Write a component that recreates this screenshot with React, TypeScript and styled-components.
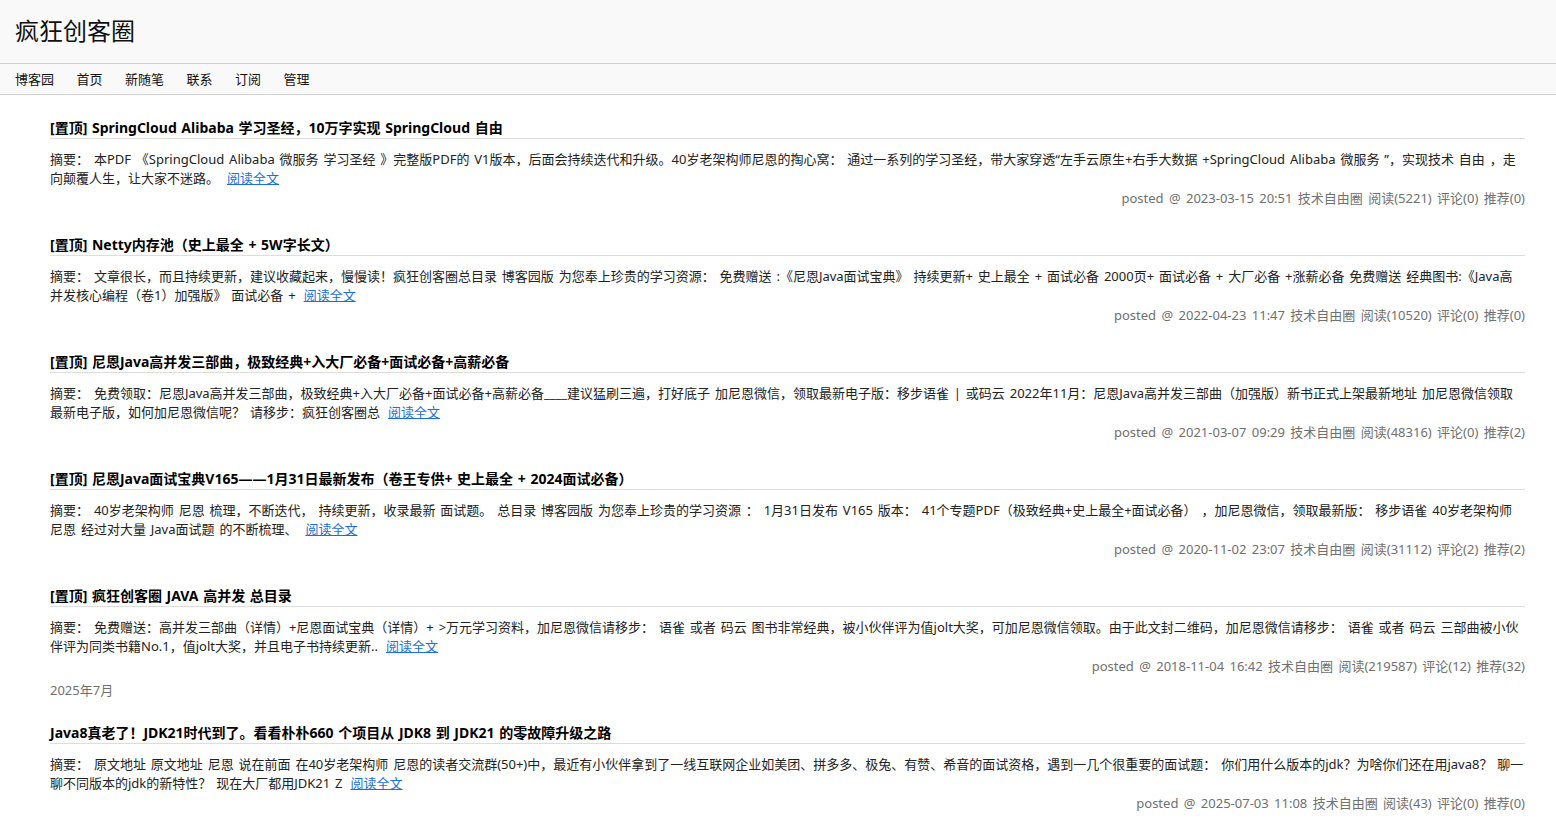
import React from 'react';
import styled, { createGlobalStyle } from 'styled-components';

const GlobalStyle = createGlobalStyle`
  html, body {
    margin: 0;
    padding: 0;
    background: #fff;
  }
  body {
    font-family: "Noto Sans", "Noto Sans CJK SC", sans-serif;
    font-size: 13px;
    color: #333;
  }
`;

const Header = styled.header`
  background: #f9f9f9;
  border-bottom: 1px solid #d0d0d0;
  height: 63px;
  display: flex;
  align-items: center;
  padding: 0 15px;
`;

const BlogTitle = styled.a`
  font-size: 24px;
  color: #111;
  text-decoration: none;
  line-height: 30px;
  margin-top: -2px;
`;

const NavBar = styled.nav`
  background: #f9f9f9;
  border-bottom: 1px solid #d0d0d0;
  height: 30px;
  display: flex;
  align-items: center;
  gap: 22.5px;
  padding: 0 15px;
`;

const NavLink = styled.a`
  color: #111;
  font-size: 13px;
  line-height: 18px;
  text-decoration: none;
`;

const Main = styled.main`
  padding: 24px 31px 20px 50px;
`;

const Post = styled.article`
  margin-bottom: 28px;
`;

const PostTitle = styled.h2`
  margin: 0;
  font-size: 14px;
  font-weight: bold;
  color: #000;
  line-height: 18px;
  padding-bottom: 1px;
  border-bottom: 1px solid #ddd;
  word-spacing: 1px;
`;

const Summary = styled.p`
  margin: 11px 0 0;
  font-size: 13px;
  line-height: 19px;
  color: #222;
`;

const SummaryText = styled.span`
  word-spacing: 1.5px;
`;

const ReadMore = styled.a`
  color: #1a6fd8;
  text-decoration: underline;
  margin-left: 8px;
`;

const PostDesc = styled.div`
  text-align: right;
  color: #707070;
  font-size: 13px;
  line-height: 19px;
  margin-top: 1px;
  word-spacing: 2px;
`;

const DayTitle = styled.div`
  color: #707070;
  font-size: 13px;
  line-height: 19px;
  margin: -23px 0 24px;
`;

type PostData = {
  title: string;
  summary: string;
  date: string;
  read: number;
  comment: number;
  digg: number;
  pinned?: boolean;
};

const posts: PostData[] = [
  {
    pinned: true,
    title: 'SpringCloud Alibaba 学习圣经，10万字实现 SpringCloud 自由',
    summary:
      '摘要： 本PDF 《SpringCloud Alibaba 微服务 学习圣经 》完整版PDF的 V1版本，后面会持续迭代和升级。40岁老架构师尼恩的掏心窝： 通过一系列的学习圣经，带大家穿透“左手云原生+右手大数据 +SpringCloud Alibaba 微服务 ”，实现技术 自由 ，走向颠覆人生，让大家不迷路。',
    date: '2023-03-15 20:51',
    read: 5221,
    comment: 0,
    digg: 0,
  },
  {
    pinned: true,
    title: 'Netty内存池（史上最全 + 5W字长文）',
    summary:
      '摘要： 文章很长，而且持续更新，建议收藏起来，慢慢读！疯狂创客圈总目录 博客园版 为您奉上珍贵的学习资源： 免费赠送 :《尼恩Java面试宝典》 持续更新+ 史上最全 + 面试必备 2000页+ 面试必备 + 大厂必备 +涨薪必备 免费赠送 经典图书:《Java高并发核心编程（卷1）加强版》 面试必备 +',
    date: '2022-04-23 11:47',
    read: 10520,
    comment: 0,
    digg: 0,
  },
  {
    pinned: true,
    title: '尼恩Java高并发三部曲，极致经典+入大厂必备+面试必备+高薪必备',
    summary:
      '摘要： 免费领取：尼恩Java高并发三部曲，极致经典+入大厂必备+面试必备+高薪必备____建议猛刷三遍，打好底子 加尼恩微信，领取最新电子版：移步语雀 | 或码云 2022年11月：尼恩Java高并发三部曲（加强版）新书正式上架最新地址 加尼恩微信领取最新电子版，如何加尼恩微信呢？ 请移步：疯狂创客圈总',
    date: '2021-03-07 09:29',
    read: 48316,
    comment: 0,
    digg: 2,
  },
  {
    pinned: true,
    title: '尼恩Java面试宝典V165——1月31日最新发布（卷王专供+ 史上最全 + 2024面试必备）',
    summary:
      '摘要： 40岁老架构师 尼恩 梳理，不断迭代， 持续更新，收录最新 面试题。 总目录 博客园版 为您奉上珍贵的学习资源 ： 1月31日发布 V165 版本： 41个专题PDF（极致经典+史上最全+面试必备） ，加尼恩微信，领取最新版： 移步语雀 40岁老架构师 尼恩 经过对大量 Java面试题 的不断梳理、',
    date: '2020-11-02 23:07',
    read: 31112,
    comment: 2,
    digg: 2,
  },
  {
    pinned: true,
    title: '疯狂创客圈 JAVA 高并发 总目录',
    summary:
      '摘要： 免费赠送：高并发三部曲（详情）+尼恩面试宝典（详情）+ >万元学习资料，加尼恩微信请移步： 语雀 或者 码云 图书非常经典，被小伙伴评为值jolt大奖，可加尼恩微信领取。由于此文封二维码，加尼恩微信请移步： 语雀 或者 码云 三部曲被小伙伴评为同类书籍No.1，值jolt大奖，并且电子书持续更新..',
    date: '2018-11-04 16:42',
    read: 219587,
    comment: 12,
    digg: 32,
  },
];

const latest: PostData = {
  title: 'Java8真老了！JDK21时代到了。看看朴朴660 个项目从 JDK8 到 JDK21 的零故障升级之路',
  summary:
    '摘要： 原文地址 原文地址 尼恩 说在前面 在40岁老架构师 尼恩的读者交流群(50+)中，最近有小伙伴拿到了一线互联网企业如美团、拼多多、极兔、有赞、希音的面试资格，遇到一几个很重要的面试题： 你们用什么版本的jdk？为啥你们还在用java8？ 聊一聊不同版本的jdk的新特性？ 现在大厂都用JDK21 Z',
  date: '2025-07-03 11:08',
  read: 43,
  comment: 0,
  digg: 0,
};

const PostItem: React.FC<{ post: PostData }> = ({ post }) => (
  <Post>
    <PostTitle>
      {post.pinned ? '[置顶] ' : ''}
      {post.title}
    </PostTitle>
    <Summary>
      <SummaryText>{post.summary}</SummaryText>
      <ReadMore href="#">阅读全文</ReadMore>
    </Summary>
    <PostDesc>
      posted @ {post.date} 技术自由圈 阅读({post.read}) 评论({post.comment}) 推荐({post.digg})
    </PostDesc>
  </Post>
);

const navItems = ['博客园', '首页', '新随笔', '联系', '订阅', '管理'];

export default function App() {
  return (
    <>
      <GlobalStyle />
      <Header>
        <BlogTitle href="#">疯狂创客圈</BlogTitle>
      </Header>
      <NavBar>
        {navItems.map((n) => (
          <NavLink key={n} href="#">
            {n}
          </NavLink>
        ))}
      </NavBar>
      <Main>
        {posts.map((p) => (
          <PostItem key={p.title} post={p} />
        ))}
        <DayTitle>2025年7月</DayTitle>
        <PostItem post={latest} />
      </Main>
    </>
  );
}
